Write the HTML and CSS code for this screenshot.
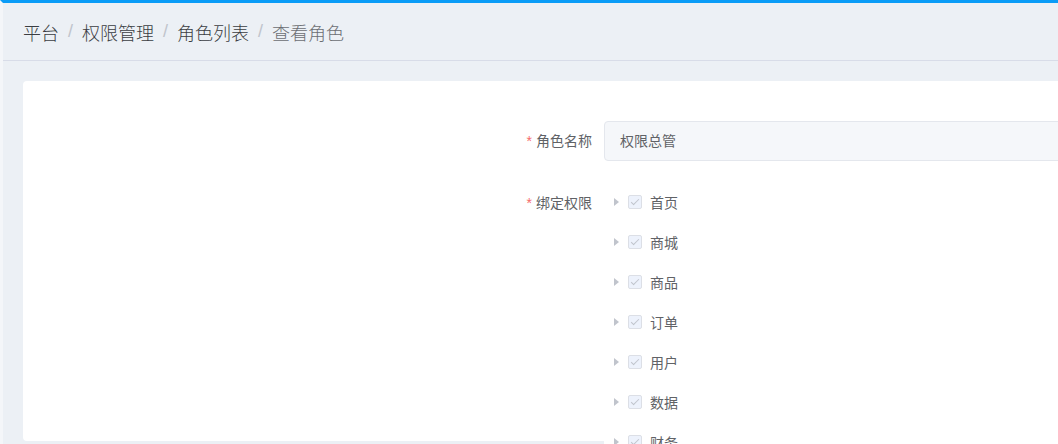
FILE: index.html
```html
<!DOCTYPE html>
<html lang="zh-CN">
<head>
<meta charset="UTF-8">
<meta name="viewport" content="width=device-width, initial-scale=1.0">
<title>查看角色</title>
<link rel="stylesheet" href="styles.css">
</head>
<body>

<div class="app">
  <!-- Breadcrumb Bar -->
  <div class="navbar">
    <span class="crumb">平台</span>
    <span class="sep">/</span>
    <span class="crumb">权限管理</span>
    <span class="sep">/</span>
    <span class="crumb">角色列表</span>
    <span class="sep">/</span>
    <span class="crumb current">查看角色</span>
  </div>

  <div class="main">
    <div class="card">
      <div class="form">
        <div class="form-item">
          <label class="form-label"><i class="star">*</i>角色名称</label>
          <div class="form-content">
            <div class="input">权限总管</div>
          </div>
        </div>

        <div class="form-item">
          <label class="form-label"><i class="star">*</i>绑定权限</label>
          <div class="form-content">
            <div class="tree">
              <div class="tree-node"><span class="caret"></span><span class="checkbox"></span><span class="node-label">首页</span></div>
              <div class="tree-node"><span class="caret"></span><span class="checkbox"></span><span class="node-label">商城</span></div>
              <div class="tree-node"><span class="caret"></span><span class="checkbox"></span><span class="node-label">商品</span></div>
              <div class="tree-node"><span class="caret"></span><span class="checkbox"></span><span class="node-label">订单</span></div>
              <div class="tree-node"><span class="caret"></span><span class="checkbox"></span><span class="node-label">用户</span></div>
              <div class="tree-node"><span class="caret"></span><span class="checkbox"></span><span class="node-label">数据</span></div>
              <div class="tree-node"><span class="caret"></span><span class="checkbox"></span><span class="node-label">财务</span></div>
              <div class="tree-node"><span class="caret"></span><span class="checkbox"></span><span class="node-label">设置</span></div>
            </div>
          </div>
        </div>
      </div>
    </div>
  </div>
</div>

</body>
</html>
```

FILE: styles.css
```css
/* General Styling */
body {
  margin: 0;
  overflow: hidden;
  font-family: "Helvetica Neue", "Liberation Sans", "Noto Sans CJK SC", sans-serif;
  background-color: #ecf0f5;
}

.app {
  width: 1440px;
  border-top: 3px solid #0a9cf7;
  border-left: 3px solid #f4f6f9;
  background-color: #ecf0f5;
}

/* Breadcrumb */
.navbar {
  display: flex;
  align-items: center;
  height: 57px;
  padding: 0 20px;
  border-bottom: 1px solid #d8dce8;
  font-size: 18px;
  font-weight: 300;
}

.crumb {
  color: #3a3d42;
}

.crumb.current {
  color: #6b6e73;
}

.sep {
  margin: 0 9px;
  color: #c0c4cc;
}

/* Card */
.main {
  padding: 20px 0 20px 20px;
}

.card {
  height: 320px;
  padding-top: 40px;
  background-color: #fff;
  border-radius: 4px;
}

.form {
  padding-left: 461px;
}

.form-item {
  display: flex;
  margin-bottom: 22px;
}

.form-label {
  width: 120px;
  padding-right: 12px;
  box-sizing: border-box;
  text-align: right;
  font-size: 14px;
  line-height: 40px;
  color: #606266;
}

.star {
  font-style: normal;
  color: #f56c6c;
  margin-right: 4px;
}

.form-content {
  flex: 1;
}

.input {
  width: 520px;
  height: 40px;
  box-sizing: border-box;
  padding: 0 15px;
  line-height: 38px;
  font-size: 14px;
  color: #606266;
  background-color: #f5f7fa;
  border: 1px solid #e4e7ed;
  border-radius: 4px;
}

/* Permission Tree */
.tree {
  width: 520px;
  margin-top: -1px;
  background-color: #fff;
}

.tree-node {
  display: flex;
  align-items: center;
  height: 40px;
  font-size: 14px;
  color: #606266;
}

.caret {
  width: 0;
  height: 0;
  margin-left: 10px;
  margin-right: 9px;
  border-top: 4px solid transparent;
  border-bottom: 4px solid transparent;
  border-left: 5px solid #c0c4cc;
}

.checkbox {
  position: relative;
  width: 14px;
  height: 14px;
  box-sizing: border-box;
  margin-right: 8px;
  border: 1px solid #dcdfe6;
  border-radius: 2px;
  background-color: #edf2fc;
}

.checkbox::after {
  content: "";
  position: absolute;
  left: 4px;
  top: 1px;
  width: 3px;
  height: 7px;
  border: 1px solid #c0c4cc;
  border-left: 0;
  border-top: 0;
  transform: rotate(45deg);
}
```
